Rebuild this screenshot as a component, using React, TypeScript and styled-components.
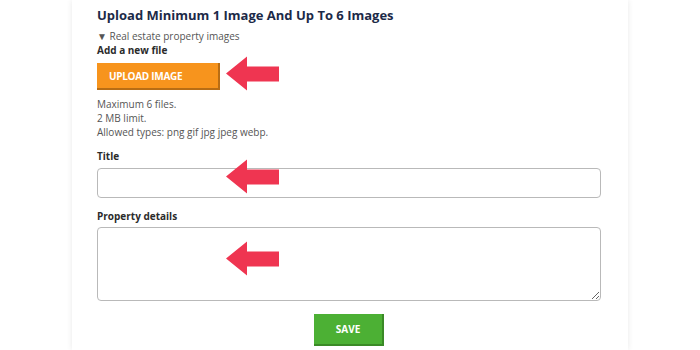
import React from "react";
import styled, { createGlobalStyle } from "styled-components";

const Global = createGlobalStyle`
  html, body { margin: 0; padding: 0; background: #ffffff; }
  body { font-family: "Open Sans", "Liberation Sans", sans-serif; }
`;

const Page = styled.div`
  width: 700px;
  height: 350px;
  overflow: hidden;
  display: flex;
  justify-content: center;
`;

const Card = styled.div`
  width: 556px;
  box-sizing: border-box;
  padding: 5px 27px 20px 25px;
  background: #fff;
  box-shadow: 0 0 6px rgba(0, 0, 0, 0.09);
  display: flex;
  flex-direction: column;
`;

const Heading = styled.h2`
  margin: 0;
  font-size: 13px;
  line-height: 20px;
  font-weight: 700;
  color: #1c2a48;
`;

const Summary = styled.div`
  margin-top: 4px;
  font-size: 10px;
  line-height: 14px;
  color: #555;
`;

const Label = styled.div<{ $top?: number }>`
  margin-top: ${(p) => p.$top ?? 0}px;
  font-size: 10px;
  line-height: 14px;
  font-weight: 700;
  color: #2b2b2b;
`;

const Annotated = styled.div`
  position: relative;
`;

const ArrowMark = styled.svg<{ $top: number }>`
  position: absolute;
  left: 129px;
  top: ${(p) => p.$top}px;
  pointer-events: none;
`;

const UploadButton = styled.button`
  margin-top: 6px;
  width: 123px;
  height: 27px;
  border: none;
  border-right: 2px solid #b86d14;
  border-bottom: 2px solid #b86d14;
  background: #f7941d;
  color: #fff;
  font-family: inherit;
  font-weight: 700;
  font-size: 10px;
  letter-spacing: -0.3px;
  text-align: left;
  padding: 0 0 0 12px;
  box-sizing: border-box;
`;

const Info = styled.div`
  margin-top: 7px;
  font-size: 10px;
  line-height: 14px;
  color: #555;
`;

const Input = styled.input`
  display: block;
  margin-top: 5px;
  width: 100%;
  height: 30px;
  box-sizing: border-box;
  border: 1px solid #b9b9b9;
  border-radius: 4px;
  background: #fff;
`;

const TextArea = styled.textarea`
  display: block;
  margin-top: 4px;
  width: 100%;
  height: 74px;
  box-sizing: border-box;
  border: 1px solid #b9b9b9;
  border-radius: 4px;
  background: #fff;
  resize: vertical;
`;

const Actions = styled.div`
  display: flex;
  justify-content: center;
  margin-top: 13px;
`;

const SaveButton = styled.button`
  width: 70px;
  height: 32px;
  border: none;
  border-right: 2px solid #3a8a26;
  border-bottom: 2px solid #3a8a26;
  background: #4cb034;
  color: #fff;
  font-family: inherit;
  font-weight: 700;
  font-size: 10px;
  box-sizing: border-box;
`;

const Arrow = ({ top }: { top: number }) => (
  <ArrowMark $top={top} width="54" height="36" viewBox="0 0 54 36">
    <path d="M0 17.5 L21 0.5 L21 10.5 L53 10.5 L53 25.5 L21 25.5 L21 34.5 Z" fill="#ef3551" />
  </ArrowMark>
);

export default function App() {
  return (
    <>
      <Global />
      <Page>
        <Card>
          <Heading>Upload Minimum 1 Image And Up To 6 Images</Heading>
          <Summary>▼ Real estate property images</Summary>
          <Label>Add a new file</Label>
          <Annotated>
            <UploadButton>UPLOAD IMAGE</UploadButton>
            <Arrow top={-1} />
          </Annotated>
          <Info>
            Maximum 6 files.
            <br />
            2 MB limit.
            <br />
            Allowed types: png gif jpg jpeg webp.
          </Info>
          <Label $top={10}>Title</Label>
          <Annotated>
            <Input type="text" />
            <Arrow top={-4} />
          </Annotated>
          <Label $top={11}>Property details</Label>
          <Annotated>
            <TextArea />
            <Arrow top={18} />
          </Annotated>
          <Actions>
            <SaveButton>SAVE</SaveButton>
          </Actions>
        </Card>
      </Page>
    </>
  );
}
